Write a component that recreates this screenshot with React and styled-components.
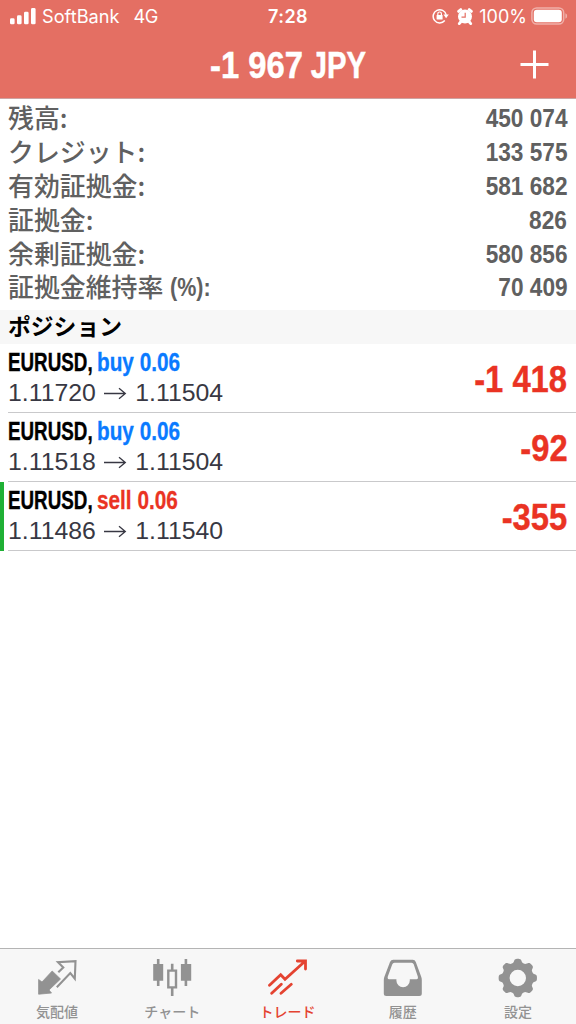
import React from 'react'
import styled, { createGlobalStyle, css } from 'styled-components'

const colors = {
  header: '#e46f63',
  loss: '#ea3323',
  buy: '#0a7aff',
  label: '#606060',
  muted: '#929292',
  line: '#c9c9cb',
  panel: '#f7f7f7',
  mark: '#1fb035',
}

const account = [
  { label: '残高:', value: '450 074' },
  { label: 'クレジット:', value: '133 575' },
  { label: '有効証拠金:', value: '581 682' },
  { label: '証拠金:', value: '826' },
  { label: '余剰証拠金:', value: '580 856' },
  { label: '証拠金維持率', unit: '(%):', value: '70 409' },
]

const positions = [
  { symbol: 'EURUSD,', side: 'buy', volume: '0.06', open: '1.11720', current: '1.11504', profit: '-1 418' },
  { symbol: 'EURUSD,', side: 'buy', volume: '0.06', open: '1.11518', current: '1.11504', profit: '-92' },
  { symbol: 'EURUSD,', side: 'sell', volume: '0.06', open: '1.11486', current: '1.11540', profit: '-355', marked: true },
]

const GlobalStyle = createGlobalStyle`
  * {
    box-sizing: border-box;
  }
  body {
    margin: 0;
    background: #fff;
  }
`

// bold grotesque squeezed horizontally towards one edge
const condensed = (ratio, edge = 'left') => css`
  display: inline-block;
  flex: none;
  font-family: 'Liberation Sans', sans-serif;
  font-weight: 700;
  white-space: nowrap;
  transform: scaleX(${ratio});
  transform-origin: ${edge} center;
`

const Screen = styled.div`
  display: flex;
  flex-direction: column;
  width: 576px;
  height: 1024px;
  overflow: hidden;
  background: #fff;
  font-family: 'Liberation Sans', 'Noto Sans CJK JP', sans-serif;
`

const Header = styled.header`
  height: 98px;
  flex: none;
  background: ${colors.header};
  color: #fff;
  box-shadow: 0 1px 0 #cda3a2;
`

const StatusBar = styled.div`
  display: grid;
  grid-template-columns: 1fr auto 1fr;
  align-items: center;
  height: 32px;
  padding: 0 8px 0 10px;
  font-family: Inter, sans-serif;
  font-size: 18.2px;
`

const StatusGroup = styled.div`
  display: flex;
  align-items: center;
  justify-content: ${({ $end }) => ($end ? 'flex-end' : 'flex-start')};
`

const Carrier = styled.span`
  margin-left: 6px;
`

const Network = styled.span`
  margin-left: 14px;
  letter-spacing: -0.4px;
`

const Clock = styled.span`
  margin-right: 2px;
  font-weight: 600;
  font-size: 18px;
  letter-spacing: 0.5px;
`

const Percent = styled.span`
  margin: 0 4px 0 6px;
  font-size: 18px;
`

const StatusSvg = styled.svg`
  display: block;
  flex: none;
  margin-left: ${({ $left = 0 }) => $left}px;
`

const NavBar = styled.div`
  display: grid;
  grid-template-columns: 1fr auto 1fr;
  align-items: center;
  height: 66px;
  padding: 0 27px;
`

const Title = styled.h1`
  display: flex;
  grid-column: 2;
  margin: 2px 0 0;
  font-size: 37px;
  line-height: 40px;
  -webkit-text-stroke: 0.5px currentColor;
`

const TitleAmount = styled.span`
  ${condensed(0.885)}
`

const TitleCurrency = styled.span`
  ${condensed(0.79, 'right')}
  margin-left: -18px;
`

const AddButton = styled.button`
  justify-self: end;
  margin: 0 0 2px;
  padding: 0;
  border: 0;
  background: none;
  color: inherit;

  svg {
    display: block;
  }
`

const Account = styled.section`
  flex: none;
  height: 212px;
  padding: 4px 8px 0;
`

const AccountRow = styled.div`
  display: flex;
  align-items: center;
  justify-content: space-between;
  height: 33.8px;
  color: ${colors.label};
`

const AccountLabel = styled.span`
  display: flex;
  align-items: center;
  height: 33px;
  margin-top: -4px;
  font-family: 'Noto Sans CJK JP', sans-serif;
  font-weight: 500;
  font-size: 25.9px;
  line-height: 33px;
`

const Unit = styled.span`
  ${condensed(0.86)}
  margin: 3px 0 0 7px;
  font-size: 25px;
`

const AccountValue = styled.span`
  ${condensed(0.905, 'right')}
  padding-right: 1px;
  font-size: 25px;
`

const SectionTitle = styled.h2`
  flex: none;
  height: 34px;
  margin: 0;
  padding-left: 8px;
  background: ${colors.panel};
  color: #000;
  font-family: 'Noto Sans CJK JP', sans-serif;
  font-weight: 700;
  font-size: 22.8px;
  line-height: 31px;
`

const PositionRow = styled.div`
  display: flex;
  flex: none;
  height: 69px;
  padding-left: ${({ $marked }) => ($marked ? 4 : 8)}px;
  border-left: ${({ $marked }) => ($marked ? `4px solid ${colors.mark}` : '0')};
`

const PositionBody = styled.div`
  display: flex;
  flex: 1;
  align-items: center;
  justify-content: space-between;
  padding-right: 8px;
  border-bottom: 1px solid ${colors.line};
`

const Deal = styled.div`
  display: flex;
  height: 32px;
  margin-top: -2px;
  color: #000;
  font-size: 25px;
  line-height: 33px;
`

const Symbol = styled.span`
  ${condensed(0.752)}
  -webkit-text-stroke: 0.4px currentColor;
`

const Side = styled.span`
  ${condensed(0.83)}
  margin-left: -23.5px;
  color: ${({ $side }) => ($side === 'buy' ? colors.buy : colors.loss)};
  -webkit-text-stroke: 0.3px currentColor;
`

const Prices = styled.div`
  display: flex;
  align-items: center;
  height: 30px;
  color: #383843;
  font-size: 24.8px;
  line-height: 30px;

  svg {
    margin: 0 8px 1px 7.5px;
  }
`

const Profit = styled.span`
  ${condensed(0.885, 'right')}
  padding: 3px 1px 0 0;
  color: ${colors.loss};
  font-size: 37px;
  -webkit-text-stroke: 0.4px currentColor;
`

const TabBar = styled.nav`
  display: grid;
  grid-template-columns: repeat(5, 1fr);
  flex: none;
  height: 76px;
  margin-top: auto;
  border-top: 1px solid #b4b4b4;
  background: ${colors.panel};
`

const Tab = styled.div`
  display: flex;
  flex-direction: column;
  align-items: center;
  padding-top: 9px;
  color: ${({ $active }) => ($active ? '#e44331' : colors.muted)};
`

const TabLabel = styled.span`
  margin: 3px 1px 0 0;
  font-family: 'Noto Sans CJK JP', sans-serif;
  font-weight: 500;
  font-size: 14px;
  line-height: 20px;
`

const TabIcon = ({ children }) => (
  <svg width="40" height="40" viewBox="0 0 40 40" fill="none" stroke="currentColor">
    {children}
  </svg>
)

const QuotesIcon = () => (
  <TabIcon>
    <path d="M14.2 13L22.5 21L11 32L13.5 35L.6 36.2L.6 21.5L4 24Z" fill="currentColor" strokeWidth=".8" strokeLinejoin="round" />
    <path d="M20.3 14.3L25.3 9.4L20 4.2L37.5 3.1L36.8 20.7L32.3 15L18.8 29.2" strokeWidth="2.1" />
  </TabIcon>
)

const ChartIcon = () => (
  <TabIcon>
    <path d="M5.2 1V28M32.9 1V28M19.2 5.7V12M19.2 30V38" strokeWidth="2.6" />
    <path d="M.2 6H10.2V22.7H.2ZM27.9 6H38.2V22.7H27.9Z" fill="currentColor" stroke="none" />
    <path d="M15.3 12.6H23V29.4H15.3Z" strokeWidth="2.4" />
  </TabIcon>
)

const TradeIcon = () => (
  <TabIcon>
    <path
      d="M1.5 27.3L12.7 16.8L17 21.3L37 3.2M29.3 3H37.5V11M3.7 35.3L13.3 26.3M13 35.3L23.3 26.3"
      strokeWidth="2.8"
      strokeLinecap="round"
    />
  </TabIcon>
)

const HistoryIcon = () => (
  <TabIcon>
    <path
      fill="currentColor"
      stroke="none"
      fillRule="evenodd"
      d="M10.3 1.7H29.7Q32 1.7 32.8 4L38.3 19Q38.8 20.5 38.8 22V35.5Q38.8 38 36.3 38H3.3Q.8 38 .8 35.5V22Q.8 20.5 1.3 19L7 4Q8 1.7 10.3 1.7ZM11.5 4.7Q9.8 4.7 9.3 6.3L4.8 18.5Q4.2 21.2 6 21.2H13.4V22.5A6.7 6.7 0 0 0 26.8 22.5V21.2H33.6Q35.4 21.2 34.8 18.5L30.7 6.3Q30.2 4.7 28.5 4.7Z"
    />
  </TabIcon>
)

// eight rounded teeth around the hub
const gearPath = Array.from({ length: 144 }, (_, i) => {
  const angle = (i / 144) * Math.PI * 2
  const wave = Math.tanh(2 * (Math.cos(angle * 8) + 0.15))
  const r = 17.4 + 1.8 * wave
  return `${i ? 'L' : 'M'}${(19.8 + r * Math.cos(angle)).toFixed(2)} ${(20 + r * Math.sin(angle)).toFixed(2)}`
}).join('')

const SettingsIcon = () => (
  <TabIcon>
    <path
      fill="currentColor"
      stroke="none"
      fillRule="evenodd"
      d={`${gearPath}ZM28 20A8.2 8.2 0 1 0 11.6 20A8.2 8.2 0 1 0 28 20Z`}
    />
  </TabIcon>
)

const SignalIcon = () => (
  <StatusSvg width="26" height="17" viewBox="0 0 26 17" fill="#fff">
    <rect x="0" y="10.3" width="4.6" height="6" rx="1.4" />
    <rect x="7" y="7.3" width="4.6" height="9" rx="1.4" />
    <rect x="14" y="3.7" width="4.6" height="12.6" rx="1.4" />
    <rect x="21" y="0" width="4.6" height="16.3" rx="1.4" />
  </StatusSvg>
)

const LockIcon = () => (
  <StatusSvg width="17" height="16" viewBox="0 0 17 16" fill="none" stroke="#fff">
    <path d="M12.8 12.6A6.6 6.6 0 1 1 14.2 6.8" strokeWidth="1.5" />
    <path d="M11.4 6.6H16.8L14.1 10.2Z" fill="#fff" stroke="none" />
    <rect x="4.6" y="7" width="6" height="4.5" rx=".6" fill="#fff" stroke="none" />
    <path d="M5.8 7.2V5.8A1.8 1.8 0 0 1 9.4 5.8V7.2" strokeWidth="1.2" />
  </StatusSvg>
)

const AlarmIcon = () => (
  <StatusSvg $left={8} width="16" height="17" viewBox="0 0 16 17">
    <circle cx="8" cy="8.6" r="7" fill="#fff" />
    <path d="M1.6 3.4L3.8 1.6M12.2 1.6L14.4 3.4M3.6 14L2.3 15.6M12.4 14L13.7 15.6" stroke="#fff" strokeWidth="2.8" strokeLinecap="round" />
    <path d="M8.2 4.7V9.2H4.5" fill="none" stroke={colors.header} strokeWidth="1.2" />
  </StatusSvg>
)

const BatteryIcon = () => (
  <StatusSvg width="37" height="18" viewBox="0 0 37 18">
    <rect x=".9" y=".9" width="31.8" height="16.2" rx="4.8" fill="none" stroke="#fff" strokeOpacity=".45" strokeWidth="1.5" />
    <rect x="2.8" y="2.8" width="28" height="12.4" rx="3" fill="#fff" />
    <path d="M34.4 6.2Q36.2 7 36.2 9Q36.2 11 34.4 11.8Z" fill="#fff" fillOpacity=".45" />
  </StatusSvg>
)

const ArrowIcon = () => (
  <svg width="24" height="14" viewBox="0 0 24 14" fill="none" stroke="#383843" strokeWidth="1.3">
    <path d="M1 7.5H22M16 2.2L22.3 7.5L16 12.8" />
  </svg>
)

const tabs = [
  { label: '気配値', icon: QuotesIcon },
  { label: 'チャート', icon: ChartIcon },
  { label: 'トレード', icon: TradeIcon, active: true },
  { label: '履歴', icon: HistoryIcon },
  { label: '設定', icon: SettingsIcon },
]

const App = () => (
  <Screen>
    <GlobalStyle />
    <Header>
      <StatusBar>
        <StatusGroup>
          <SignalIcon />
          <Carrier>SoftBank</Carrier>
          <Network>4G</Network>
        </StatusGroup>
        <Clock>7:28</Clock>
        <StatusGroup $end>
          <LockIcon />
          <AlarmIcon />
          <Percent>100%</Percent>
          <BatteryIcon />
        </StatusGroup>
      </StatusBar>
      <NavBar>
        <Title>
          <TitleAmount>-1 967</TitleAmount>
          <TitleCurrency>JPY</TitleCurrency>
        </Title>
        <AddButton>
          <svg width="29" height="29" viewBox="0 0 29 29" stroke="#fff" strokeWidth="3">
            <path d="M14.5 .5V28.5M.5 14.5H28.5" />
          </svg>
        </AddButton>
      </NavBar>
    </Header>

    <Account>
      {account.map(({ label, unit, value }) => (
        <AccountRow key={label}>
          <AccountLabel>
            {label}
            {unit && <Unit>{unit}</Unit>}
          </AccountLabel>
          <AccountValue>{value}</AccountValue>
        </AccountRow>
      ))}
    </Account>

    <SectionTitle>ポジション</SectionTitle>
    {positions.map(position => (
      <PositionRow key={position.open} $marked={position.marked}>
        <PositionBody>
          <div>
            <Deal>
              <Symbol>{position.symbol}</Symbol>
              <Side $side={position.side}>
                {position.side} {position.volume}
              </Side>
            </Deal>
            <Prices>
              {position.open}
              <ArrowIcon />
              {position.current}
            </Prices>
          </div>
          <Profit>{position.profit}</Profit>
        </PositionBody>
      </PositionRow>
    ))}

    <TabBar>
      {tabs.map(({ label, icon: Icon, active }) => (
        <Tab key={label} $active={active}>
          <Icon />
          <TabLabel>{label}</TabLabel>
        </Tab>
      ))}
    </TabBar>
  </Screen>
)

export default App
